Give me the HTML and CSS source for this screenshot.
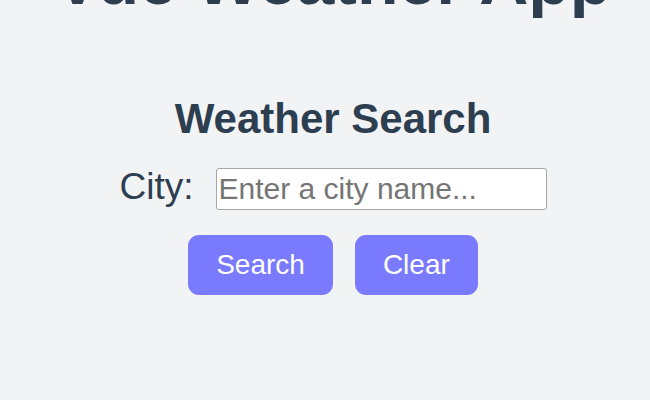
FILE: index.html
```html
<!DOCTYPE html>
<html lang="en">
<head>
<meta charset="utf-8">
<title>Vue Weather App</title>
<link rel="stylesheet" href="styles.css">
</head>
<body>
<div class="app">
  <h1 class="title">Vue Weather App</h1>
  <section class="search">
    <h2 class="search-title">Weather Search</h2>
    <div class="city-row">
      <label class="city-label" for="city">City:</label>
      <input class="city-input" id="city" type="text" placeholder="Enter a city name...">
    </div>
    <div class="actions">
      <button class="btn" type="button">Search</button>
      <button class="btn" type="button">Clear</button>
    </div>
  </section>
</div>
</body>
</html>
```

FILE: styles.css
```css
html, body {
  margin: 0;
  padding: 0;
  background: #f2f3f5;
  height: 100%;
  overflow: hidden;
}
.app {
  font-family: "Liberation Sans", Arial, sans-serif;
  color: #2c3e50;
  padding-left: 16px;
  text-align: center;
}
.title {
  font-size: 68px;
  line-height: 78px;
  font-weight: bold;
  margin: -59px 0 0;
  white-space: nowrap;
}
.search-title {
  font-size: 42px;
  line-height: 50px;
  font-weight: bold;
  margin: 75px 0 0;
}
.city-row {
  display: flex;
  justify-content: center;
  align-items: baseline;
  gap: 22px;
  margin-top: 22px;
}
.city-label {
  font-size: 37px;
  line-height: 42px;
}
.city-input {
  font-family: "Liberation Sans", Arial, sans-serif;
  font-size: 30px;
  width: 331px;
  height: 42px;
  box-sizing: border-box;
  padding: 1px 2px;
  border: 1.5px solid #a6a6a6;
  border-radius: 3px;
  background: #fff;
  color: #222;
}
.city-input::placeholder {
  color: #757575;
}
.actions {
  display: flex;
  justify-content: center;
  gap: 22px;
  margin-top: 25px;
}
.btn {
  font-family: "Liberation Sans", Arial, sans-serif;
  font-size: 28px;
  line-height: 32px;
  height: 60px;
  padding: 14px 28px;
  border: none;
  border-radius: 11px;
  background: #7a7afe;
  color: #fff;
}
```
